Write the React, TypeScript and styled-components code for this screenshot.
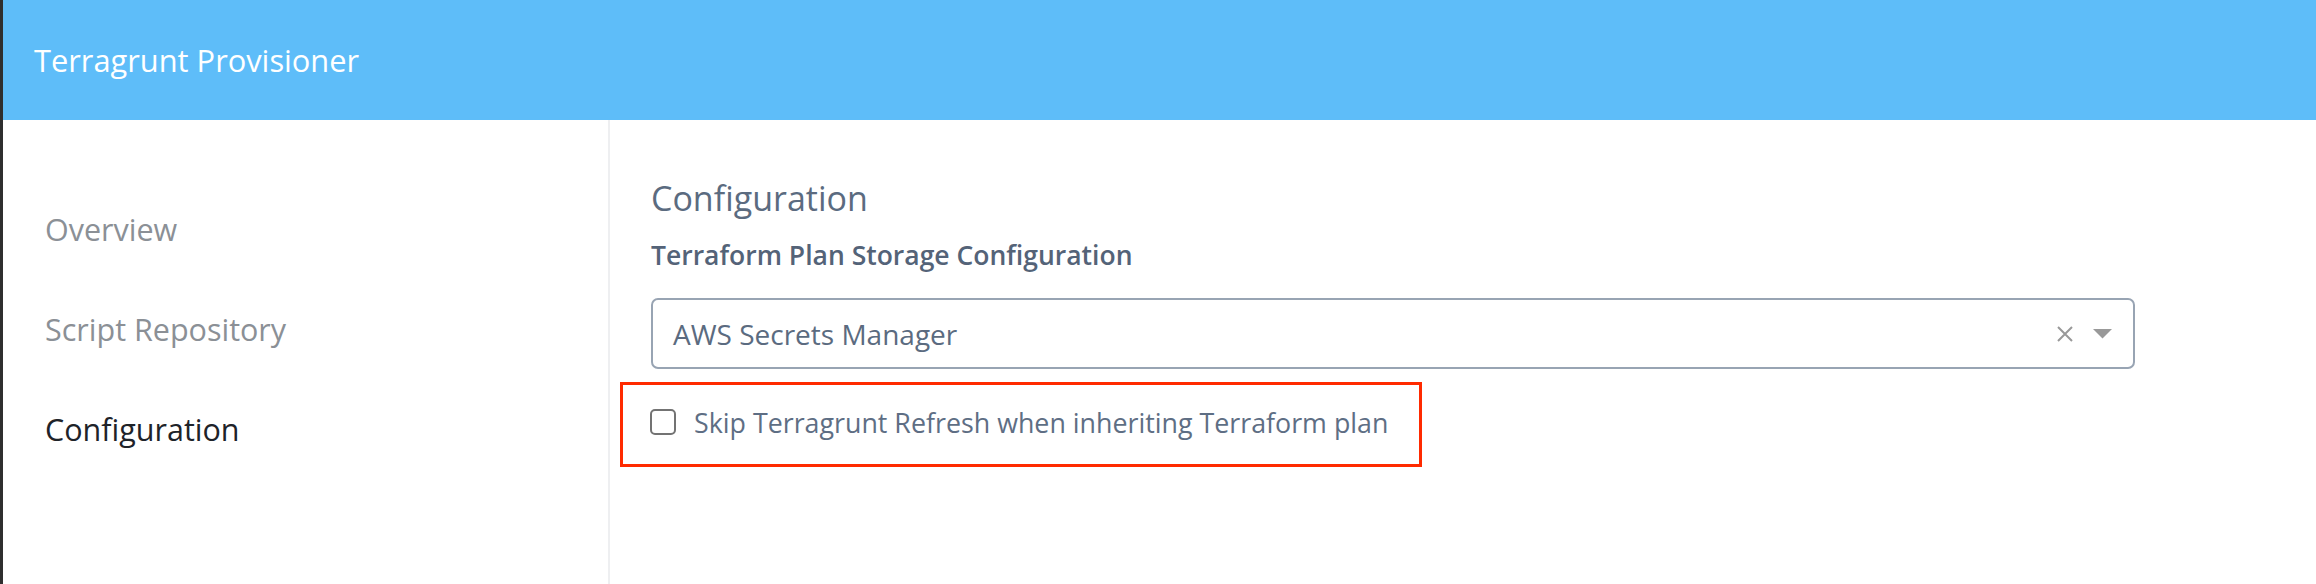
import React, { useState } from 'react';
import styled, { createGlobalStyle } from 'styled-components';

const GlobalStyle = createGlobalStyle`
  html, body {
    margin: 0;
    padding: 0;
    background: #ffffff;
  }
  body {
    font-family: "Open Sans", Lato, sans-serif;
  }
`;

const Frame = styled.div`
  display: flex;
  flex-direction: column;
  height: 584px;
  border-left: 3px solid #2f2f2f;
  box-sizing: border-box;
  overflow: hidden;
`;

const Header = styled.header`
  display: flex;
  align-items: center;
  height: 120px;
  padding-left: 31px;
  background: #5ebdf9;
  flex-shrink: 0;
`;

const Title = styled.h1`
  margin: 0;
  color: #ffffff;
  font-size: 30.8px;
  font-weight: 400;
`;

const Body = styled.div`
  display: flex;
  flex: 1;
`;

const Sidebar = styled.nav`
  display: flex;
  flex-direction: column;
  width: 607px;
  padding-top: 88px;
  border-right: 2px solid #eeeff1;
  box-sizing: border-box;
  flex-shrink: 0;
`;

const NavItem = styled.div<{ $active?: boolean }>`
  height: 100px;
  line-height: 42px;
  padding-left: 42px;
  font-size: 30.5px;
  color: ${(p) => (p.$active ? '#1e2329' : '#8b9096')};
  cursor: pointer;
`;

const Content = styled.main`
  display: flex;
  flex-direction: column;
  flex: 1;
  padding-left: 41px;
`;

const Heading = styled.h2`
  margin: 56px 0 0;
  font-size: 34px;
  font-weight: 400;
  line-height: 44px;
  color: #5b6b80;
`;

const FieldLabel = styled.label`
  margin-top: 15px;
  font-size: 26.5px;
  font-weight: 600;
  line-height: 40px;
  color: #546378;
`;

const Select = styled.div`
  display: flex;
  align-items: center;
  margin-top: 23px;
  width: 1484px;
  height: 71px;
  padding: 0 21px 0 20px;
  border: 2px solid #98a4b3;
  border-radius: 7px;
  box-sizing: border-box;
  gap: 20px;
`;

const SelectValue = styled.span`
  flex: 1;
  font-size: 28px;
  color: #5b6b80;
`;

const IconButton = styled.span`
  display: flex;
  align-items: center;
  justify-content: center;
  color: #999999;
  cursor: pointer;
`;

const Highlight = styled.div`
  display: flex;
  align-items: center;
  gap: 18px;
  margin: 13px 0 0 -31px;
  width: 802px;
  height: 85px;
  padding: 0 0 5px 27px;
  border: 3px solid #ff2a00;
  box-sizing: border-box;
`;

const CheckBox = styled.span<{ $checked: boolean }>`
  width: 26px;
  height: 26px;
  border: 2px solid #737373;
  border-radius: 5px;
  box-sizing: border-box;
  background: ${(p) => (p.$checked ? '#5ebdf9' : '#ffffff')};
  cursor: pointer;
`;

const CheckLabel = styled.span`
  font-size: 26.8px;
  color: #5e6e84;
`;

const App = () => {
  const [skipRefresh, setSkipRefresh] = useState(false);

  return (
    <>
      <GlobalStyle />
      <Frame>
        <Header>
          <Title>Terragrunt Provisioner</Title>
        </Header>
        <Body>
          <Sidebar>
            <NavItem>Overview</NavItem>
            <NavItem>Script Repository</NavItem>
            <NavItem $active>Configuration</NavItem>
          </Sidebar>
          <Content>
            <Heading>Configuration</Heading>
            <FieldLabel>Terraform Plan Storage Configuration</FieldLabel>
            <Select>
              <SelectValue>AWS Secrets Manager</SelectValue>
              <IconButton>
                <svg width="16" height="16" viewBox="0 0 16 16">
                  <path d="M1 1 L15 15 M15 1 L1 15" stroke="currentColor" strokeWidth="2" fill="none" />
                </svg>
              </IconButton>
              <IconButton>
                <svg width="19" height="10" viewBox="0 0 19 10">
                  <path d="M0 0 H19 L9.5 9.5 Z" fill="currentColor" />
                </svg>
              </IconButton>
            </Select>
            <Highlight>
              <CheckBox $checked={skipRefresh} onClick={() => setSkipRefresh(!skipRefresh)} />
              <CheckLabel>Skip Terragrunt Refresh when inheriting Terraform plan</CheckLabel>
            </Highlight>
          </Content>
        </Body>
      </Frame>
    </>
  );
};

export default App;
